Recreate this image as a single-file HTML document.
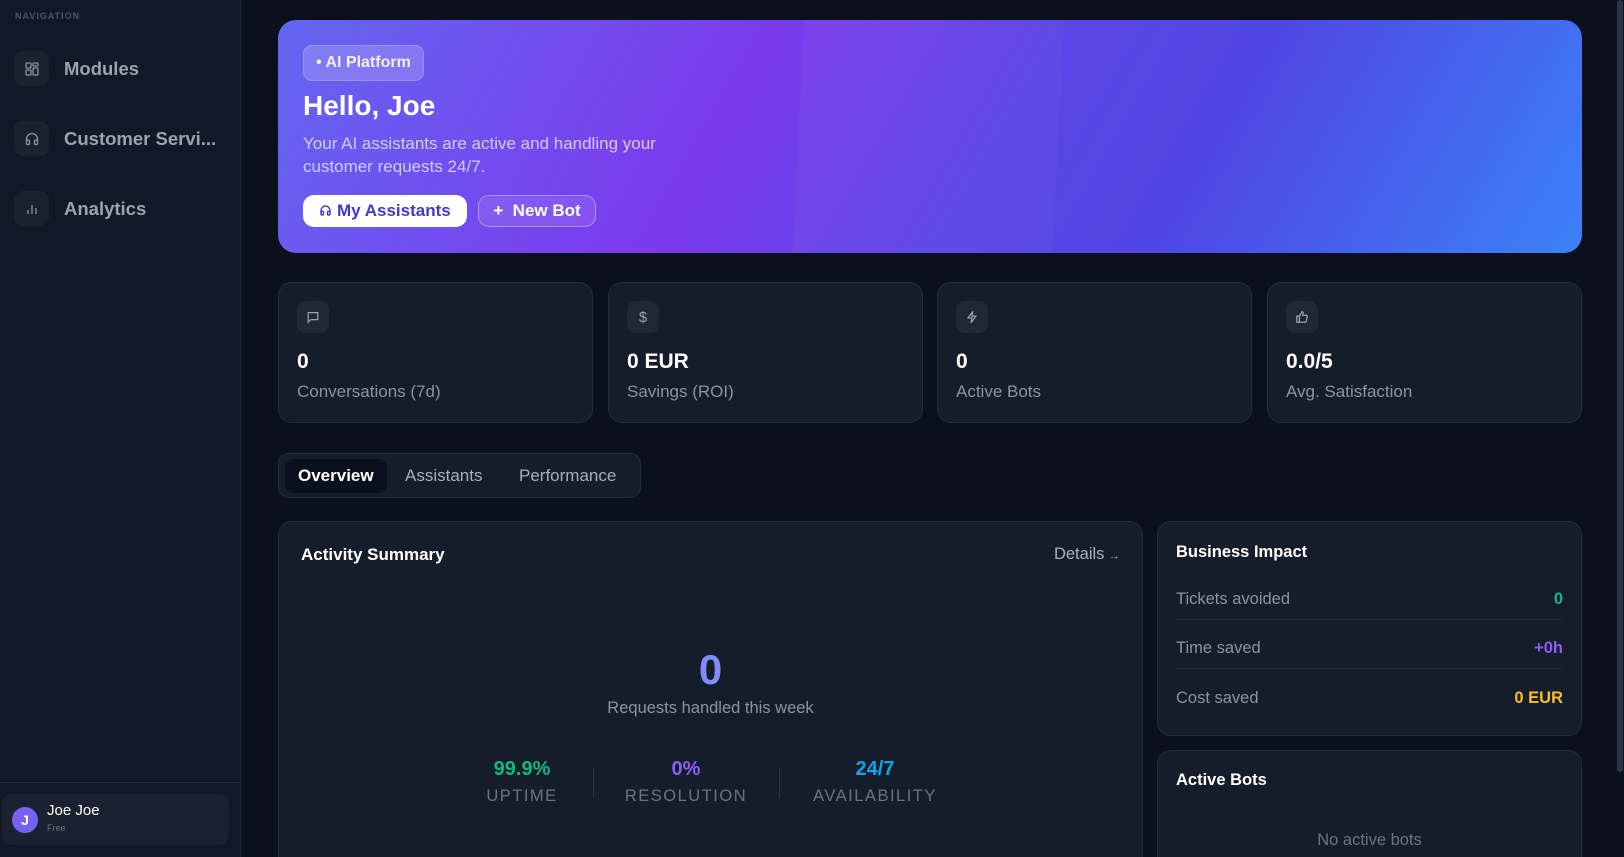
<!DOCTYPE html>
<html style="height:857px;overflow:hidden"><head><meta charset="utf-8"><style>
*{box-sizing:border-box;margin:0;padding:0}
html,body{width:1624px;height:857px;overflow:hidden}
body{background:#0b111c;font-family:"Liberation Sans",sans-serif;position:relative;color:#fff}
.wrap{position:absolute;left:0;top:0;width:1624px;height:857px;overflow:hidden}
.sb{position:absolute;left:0;top:0;width:241px;height:857px;background:#111827;border-right:1px solid #1f2937}
.nav{position:absolute;left:15px;top:11px;font-size:9px;font-weight:bold;letter-spacing:1px;color:#4b5563}
.item{position:absolute;left:14px;display:flex;align-items:center;gap:15px;font-size:18.5px;font-weight:bold;color:#9ca3af}
.ib{width:35px;height:35px;border-radius:9px;background:#1a2230;display:flex;align-items:center;justify-content:center}
.user{position:absolute;left:2px;top:794px;width:227px;height:51px;background:#1a2130;border-radius:10px}
.sep{position:absolute;left:0;top:782px;width:241px;border-top:1px solid #1f2937}
.av{position:absolute;left:10px;top:13px;width:26px;height:26px;border-radius:50%;background:linear-gradient(135deg,#8b5cf6,#6366f1);font-size:14px;font-weight:bold;text-align:center;line-height:26px}
.hero{position:absolute;left:278px;top:20px;width:1304px;height:233px;border-radius:18px;background:linear-gradient(120deg,#6366f1 0%,#7c3aed 35%,#5b45e6 55%,#4f46e5 70%,#3b82f6 100%);overflow:hidden}
.pill{position:absolute;left:25px;top:25px;height:36px;padding:0 12px;border-radius:9px;background:rgba(255,255,255,.18);border:1px solid rgba(255,255,255,.2);font-size:16px;font-weight:bold;line-height:34px;color:#f3f0ff}
.card{position:absolute;background:#161d2a;border:1px solid #232c3b;border-radius:14px}
.stat .ic{position:absolute;left:18px;top:18px;width:32px;height:32px;border-radius:9px;background:#1f2837;display:flex;align-items:center;justify-content:center}
.stat .v{position:absolute;left:18px;top:67px;font-size:21px;font-weight:bold}
.stat .l{position:absolute;left:18px;top:99px;font-size:17px;color:#8b93a1}
.row{position:absolute;left:18px;right:18px;display:flex;justify-content:space-between;font-size:16.5px;color:#8b93a1}
.st{position:absolute;top:236px;width:160px;margin-left:-80px;text-align:center}
.st .a{font-size:20px;font-weight:bold}
.st .b{font-size:16.5px;color:#6b7280;letter-spacing:1.5px;margin-top:6px}
</style></head><body><div class="wrap">
<div class="sb">
<div class="nav">NAVIGATION</div>
<div class="item" style="top:51px"><div class="ib"><svg width="16" height="16" viewBox="0 0 16 16" fill="none" stroke="#8b93a1" stroke-width="1.3"><rect x="2" y="2" width="5" height="5" rx="1"/><rect x="9" y="2" width="5" height="3" rx="1"/><rect x="2" y="9" width="5" height="5" rx="1"/><rect x="9" y="7" width="5" height="7" rx="1"/></svg></div>Modules</div>
<div class="item" style="top:121px"><div class="ib"><svg width="16" height="16" viewBox="0 0 16 16" fill="none" stroke="#8b93a1" stroke-width="1.3"><path d="M2.5 11V8a5.5 5.5 0 0 1 11 0v3"/><rect x="2.5" y="9" width="3" height="4.5" rx="1"/><rect x="10.5" y="9" width="3" height="4.5" rx="1"/></svg></div>Customer Servi...</div>
<div class="item" style="top:191px"><div class="ib"><svg width="16" height="16" viewBox="0 0 16 16" fill="none" stroke="#8b93a1" stroke-width="1.3"><path d="M4 13V9M8 13V4M12 13V7"/></svg></div>Analytics</div>
<div class="sep"></div>
<div class="user"><div class="av">J</div><div style="position:absolute;left:45px;top:8px;font-size:15px">Joe Joe</div><div style="position:absolute;left:45px;top:29px;font-size:9px;color:#6b7280">Free</div></div>
</div>
<div style="position:absolute;left:1617px;top:0;width:6px;height:772px;background:#2a3444;border-radius:3px"></div>

<div class="hero">
<div style="position:absolute;left:520px;top:-10px;width:260px;height:260px;background:rgba(255,255,255,.03);transform:skewX(-3deg)"></div>
<div class="pill">• AI Platform</div>
<div style="position:absolute;left:25px;top:70px;font-size:28px;font-weight:bold">Hello, Joe</div>
<div style="position:absolute;left:25px;top:112px;font-size:17px;line-height:23px;color:#d4cbfb;width:400px">Your AI assistants are active and handling your customer requests 24/7.</div>
<div style="position:absolute;left:25px;top:175px;width:164px;height:32px;background:#fff;border-radius:11px;color:#4338ca;font-size:17px;font-weight:bold;line-height:32px;text-align:center"><svg width="13" height="13" viewBox="0 0 16 16" fill="none" stroke="#4338ca" stroke-width="1.8" style="vertical-align:-1px"><path d="M2.5 11V8a5.5 5.5 0 0 1 11 0v3"/><rect x="2.5" y="9" width="3" height="4.5" rx="1"/><rect x="10.5" y="9" width="3" height="4.5" rx="1"/></svg> My Assistants</div>
<div style="position:absolute;left:200px;top:175px;width:118px;height:32px;border:1px solid rgba(255,255,255,.35);background:rgba(255,255,255,.1);border-radius:11px;font-size:17px;font-weight:bold;line-height:30px;text-align:center">+&nbsp; New Bot</div>
</div>

<div class="card stat" style="left:278px;top:282px;width:315px;height:141px"><div class="ic"><svg width="14" height="14" viewBox="0 0 16 16" fill="none" stroke="#9ca3af" stroke-width="1.4"><path d="M2.5 3h11v8h-8l-3 3z"/></svg></div><div class="v">0</div><div class="l">Conversations (7d)</div></div>
<div class="card stat" style="left:608px;top:282px;width:315px;height:141px"><div class="ic" style="color:#9ca3af;font-size:15px">$</div><div class="v">0 EUR</div><div class="l">Savings (ROI)</div></div>
<div class="card stat" style="left:937px;top:282px;width:315px;height:141px"><div class="ic"><svg width="14" height="14" viewBox="0 0 16 16" fill="none" stroke="#9ca3af" stroke-width="1.4"><path d="M9 1.5 3.5 9h4.5L7 14.5 12.5 7H8z"/></svg></div><div class="v">0</div><div class="l">Active Bots</div></div>
<div class="card stat" style="left:1267px;top:282px;width:315px;height:141px"><div class="ic"><svg width="14" height="14" viewBox="0 0 16 16" fill="none" stroke="#9ca3af" stroke-width="1.4"><path d="M2 7h3v7H2zM5 7l3-5c1.2 0 1.6 1 1.4 2L9 6h4c.8 0 1.3.7 1.1 1.4l-1.3 5.5c-.2.7-.7 1.1-1.4 1.1H5"/></svg></div><div class="v">0.0/5</div><div class="l">Avg. Satisfaction</div></div>

<div style="position:absolute;left:278px;top:453px;width:363px;height:45px;background:#161d2a;border:1px solid #232c3b;border-radius:11px">
<div style="position:absolute;left:6px;top:5px;width:102px;height:34px;background:#0b111c;border-radius:8px"></div>
<div style="position:absolute;left:19px;top:12px;font-size:17px;font-weight:bold">Overview</div>
<div style="position:absolute;left:126px;top:12px;font-size:17px;color:#a8afbb">Assistants</div>
<div style="position:absolute;left:240px;top:12px;font-size:17px;color:#a8afbb">Performance</div>
</div>

<div class="card" style="left:278px;top:521px;width:865px;height:380px">
<div style="position:absolute;left:22px;top:23px;font-size:17px;font-weight:bold">Activity Summary</div>
<div style="position:absolute;right:22px;top:23px;font-size:16.5px;color:#a8afbb">Details <span style="font-size:11px">→</span></div>
<div style="position:absolute;left:0;width:100%;top:124px;text-align:center;font-size:42px;font-weight:bold;color:#818cf8">0</div>
<div style="position:absolute;left:0;width:100%;top:177px;text-align:center;font-size:16.5px;color:#8b93a1">Requests handled this week</div>
<div class="st" style="left:243px"><div class="a" style="color:#10b981">99.9%</div><div class="b">UPTIME</div></div>
<div style="position:absolute;left:314px;top:246px;height:30px;border-left:1px solid #2a3343"></div>
<div class="st" style="left:407px"><div class="a" style="color:#8b5cf6">0%</div><div class="b">RESOLUTION</div></div>
<div style="position:absolute;left:500px;top:246px;height:30px;border-left:1px solid #2a3343"></div>
<div class="st" style="left:596px"><div class="a" style="color:#0ea5e9">24/7</div><div class="b">AVAILABILITY</div></div>
</div>

<div class="card" style="left:1157px;top:521px;width:425px;height:215px">
<div style="position:absolute;left:18px;top:21px;font-size:16.5px;font-weight:bold">Business Impact</div>
<div class="row" style="top:68px;padding-bottom:10px;border-bottom:1px solid #232c3b"><span>Tickets avoided</span><b style="color:#10b981">0</b></div>
<div class="row" style="top:117px;padding-bottom:10px;border-bottom:1px solid #232c3b"><span>Time saved</span><b style="color:#8b5cf6">+0h</b></div>
<div class="row" style="top:167px"><span>Cost saved</span><b style="color:#fbbf24">0 EUR</b></div>
</div>
<div class="card" style="left:1157px;top:750px;width:425px;height:160px">
<div style="position:absolute;left:18px;top:20px;font-size:16.5px;font-weight:bold">Active Bots</div>
<div style="position:absolute;left:0;width:100%;top:80px;text-align:center;font-size:16.5px;color:#6b7280">No active bots</div>
</div>
</div></body></html>
